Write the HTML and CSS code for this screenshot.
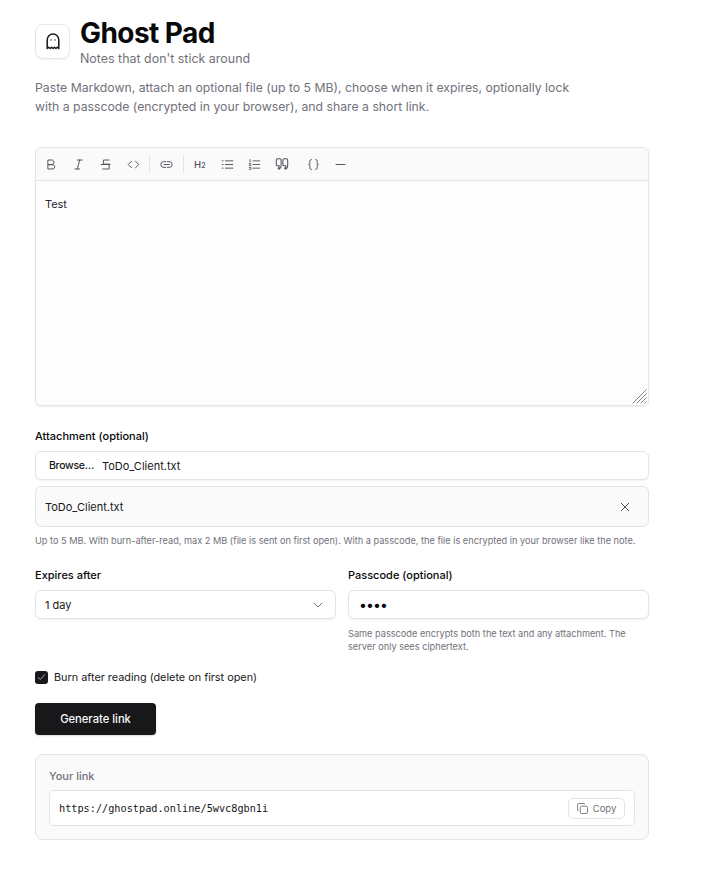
FILE: index.html
```html
<!DOCTYPE html>
<html lang="en">
<head>
<meta charset="utf-8">
<title>Ghost Pad</title>
<link rel="stylesheet" href="styles.css">
</head>
<body>
<main class="page">
  <header class="brand">
    <div class="logo">
      <svg width="14" height="17" viewBox="0 0 14 17" fill="none" stroke="#18181b" stroke-width="1.500" stroke-linejoin="round"><path d="M1.200 15.500V6.800a5.800 5.800 0 0 1 11.600 0v8.700l-1.450-1.300-1.450 1.300-1.450-1.300-1.450 1.300-1.450-1.300-1.450 1.300-1.450-1.300-1.450 1.300z"/><circle cx="5" cy="7" r=".7" fill="#18181b" stroke="none"/><circle cx="9" cy="7" r=".7" fill="#18181b" stroke="none"/></svg>
    </div>
    <div class="brand-text">
      <h1 class="title">Ghost Pad</h1>
      <p class="tagline">Notes that don't stick around</p>
    </div>
  </header>
  <p class="intro">Paste Markdown, attach an optional file (up to 5 MB), choose when it expires, optionally lock with a passcode (encrypted in your browser), and share a short link.</p>

  <section class="editor">
    <div class="toolbar">
      <button class="tool"><svg viewBox="0 0 16 16"><path d="M4 2.500h5a3 3 0 0 1 0 5.700H4zM4 8.200h5.800a2.700 2.700 0 0 1 0 5.300H4z"/></svg></button>
      <button class="tool"><svg viewBox="0 0 16 16"><path d="M6.500 2.500h6M3.500 13.500h6M9.500 2.500l-3 11"/></svg></button>
      <button class="tool"><svg viewBox="0 0 16 16"><path d="M12.500 2.500h-7l-.2 5h7.200M2.500 8h11M12.500 8v5.500h-8"/></svg></button>
      <button class="tool"><svg viewBox="0 0 16 16"><path d="M5.500 4 1.500 8l4 4M10.500 4l4 4-4 4"/></svg></button>
      <span class="sep"></span>
      <button class="tool"><svg viewBox="0 0 16 16"><path d="M7 4.500H4.500a3.500 3.500 0 0 0 0 7H7M9 4.500h2.500a3.500 3.500 0 0 1 0 7H9M5 8h6.500"/></svg></button>
      <span class="sep"></span>
      <button class="tool"><span class="h2">H<small>2</small></span></button>
      <button class="tool"><svg viewBox="0 0 16 16"><path d="M5.500 3.500h9M5.500 8h9M5.500 12.500h9M1.500 3.500h1M1.500 8h1M1.500 12.500h1"/></svg></button>
      <button class="tool"><svg viewBox="0 0 16 16"><path d="M6 3.500h8.500M6 8h8.500M6 12.500h8.500M2.500 2v3M1.500 7h2L1.500 9h2M1.500 11.500h2v2.500h-2" stroke-width="1.100"/></svg></button>
      <button class="tool"><svg class="quote" viewBox="0 0 16 16"><path d="M3 2h2.500A1.500 1.500 0 0 1 7 3.500V9a5 5 0 0 1-2.500 5l-1-1.200A3 3 0 0 0 5 10H3a1.500 1.500 0 0 1-1.500-1.500v-5A1.500 1.500 0 0 1 3 2zM10.500 2H13a1.500 1.500 0 0 1 1.500 1.500V9a5 5 0 0 1-2.500 5l-1-1.200a3 3 0 0 0 1.500-2.800h-2A1.500 1.500 0 0 1 9 8.500v-5A1.500 1.500 0 0 1 10.500 2z"/></svg></button>
      <button class="tool tool-gap"><svg viewBox="0 0 16 16"><path d="M5.500 2C4 2 3.500 2.700 3.500 4v2.500C3.500 7.500 3 8 2 8c1 0 1.500.5 1.500 1.500V12c0 1.300.5 2 2 2M10.500 2c1.500 0 2 .7 2 2v2.500c0 1 .5 1.500 1.500 1.500-1 0-1.500.5-1.500 1.500V12c0 1.300-.5 2-2 2"/></svg></button>
      <button class="tool"><svg viewBox="0 0 16 16"><path d="M2.500 8h11"/></svg></button>
    </div>
    <textarea class="note" aria-label="Note">Test</textarea>
    <svg class="grip" width="15" height="15" viewBox="0 0 15 15"><path d="M14.500 .5 .5 14.500M14.500 4.500l-10 10M14.500 8.500l-6 6M14.500 12.500l-2 2"/></svg>
  </section>

  <label class="label attach-label">Attachment (optional)</label>
  <div class="file-input"><span class="browse">Browse…</span><span>ToDo_Client.txt</span></div>
  <div class="file-chip">
    <span>ToDo_Client.txt</span>
    <svg class="remove" width="10" height="10" viewBox="0 0 10 10"><path d="M1 1l8 8M9 1L1 9"/></svg>
  </div>
  <p class="hint hint-attach">Up to 5 MB. With burn-after-read, max 2 MB (file is sent on first open). With a passcode, the file is encrypted in your browser like the note.</p>

  <div class="columns">
    <div class="field">
      <label class="label">Expires after</label>
      <div class="control select">
        <span>1 day</span>
        <svg width="10" height="6" viewBox="0 0 10 6"><path d="M1 1l4 4 4-4"/></svg>
      </div>
    </div>
    <div class="field">
      <label class="label">Passcode (optional)</label>
      <input class="control pass" type="password" value="1234" aria-label="Passcode">
      <p class="hint">Same passcode encrypts both the text and any attachment. The server only sees ciphertext.</p>
    </div>
  </div>

  <label class="burn">
    <span class="check"><svg width="9" height="8" viewBox="0 0 9 8"><path d="M1 4.200 3.300 6.500 8 1.200"/></svg></span>
    Burn after reading (delete on first open)
  </label>

  <button class="generate">Generate link</button>

  <section class="result">
    <div class="result-label">Your link</div>
    <div class="link-box">
      <code class="url">https://ghostpad.online/5wvc8gbn1i</code>
      <button class="copy">
        <svg width="11" height="11" viewBox="0 0 12 12"><rect x="3.500" y="3.500" width="8" height="8" rx="1.500"/><path d="M1.500 8.500A1 1 0 0 1 .5 7.500V2a1.500 1.500 0 0 1 1.500-1.500h5.500a1 1 0 0 1 1 1"/></svg>
        Copy
      </button>
    </div>
  </section>
</main>
</body>
</html>
```
FILE: styles.css
```css
* { box-sizing: border-box; }
html, body { margin: 0; background: #fff; }
body {
  font-family: Inter, "Liberation Sans", sans-serif;
  color: #18181b;
  font-size: 11px;
}
.page { width: 614px; margin-left: 35px; padding-top: 18px; }
button { font: inherit; color: inherit; background: none; border: 0; padding: 0; }

.brand { display: flex; align-items: flex-start; gap: 10px; }
.logo {
  width: 35px; height: 35px; margin-top: 6px;
  display: flex; align-items: center; justify-content: center;
  border: 1px solid #e7e7e9; border-radius: 8px; background: #fff;
  box-shadow: 0 1px 2px rgba(0,0,0,.06);
}
.title { margin: 0; font-size: 28px; line-height: 30px; font-weight: 700; letter-spacing: -.56px; color: #09090b; }
.tagline { margin: 2px 0 0; font-size: 12.450px; line-height: 17px; color: #71717a; }
.intro { margin: 11px 0 0; width: 560px; font-size: 12.250px; line-height: 19px; color: #71717a; }

.editor {
  position: relative;
  margin-top: 31px; height: 259px; display: flex; flex-direction: column;
  border: 1px solid #e4e4e7; border-radius: 6px; overflow: hidden;
  box-shadow: 0 1px 2px rgba(0,0,0,.08);
}
.toolbar {
  height: 33px; flex: none; display: flex; align-items: center; padding-left: 1.500px;
  background: #fafafa; border-bottom: 1px solid #e4e4e7;
}
.tool { width: 27.330px; height: 16px; display: flex; align-items: center; justify-content: center; color: #52525b; flex: none; }
.tool svg { width: 13px; height: 13px; fill: none; stroke: #52525b; stroke-width: 1.200; stroke-linecap: round; stroke-linejoin: round; }
.tool .quote { width: 14px; height: 14px; }
.tool-gap { margin-left: 4px; }
.sep { width: 1px; height: 18px; background: #e4e4e7; margin: 0 2.500px; flex: none; }
.h2 { font-size: 9.500px; font-weight: 500; }
.h2 small { font-size: 7px; }
.note {
  flex: 1; display: block; width: 100%; border: 0; outline: 0; resize: none;
  padding: 16px 9px; background: #fdfdfd; color: #27272a;
  font: 10.900px/14px Inter, "Liberation Sans", sans-serif;
}
.grip { position: absolute; right: 1px; bottom: 1px; fill: none; stroke: #808084; stroke-width: 1; }

.label { display: block; font-size: 11px; line-height: 14px; font-weight: 500; color: #09090b; }
.attach-label { margin-top: 23px; }
.file-input {
  margin-top: 8px; height: 29px; display: flex; align-items: center; gap: 8px; padding-left: 13px;
  border: 1px solid #e4e4e7; border-radius: 6px; background: #fff; color: #18181b;
  box-shadow: 0 1px 2px rgba(0,0,0,.05);
}
.browse { font-weight: 500; font-size: 10.500px; letter-spacing: -.3px; }
.file-chip {
  margin-top: 6px; height: 41px; display: flex; align-items: center; justify-content: space-between;
  padding: 0 18px 0 9px; border: 1px solid #e4e4e7; border-radius: 6px; background: #fafafa;
}
.remove { fill: none; stroke: #52525b; stroke-width: 1; }
.hint { margin: 8px 0 0; font-size: 9.200px; line-height: 13px; color: #71717a; }
.hint-attach { margin-top: 7px; white-space: nowrap; }

.columns { margin-top: 21px; display: grid; grid-template-columns: 1fr 1fr; gap: 12px; }
.field .label { margin-bottom: 8px; }
.control {
  width: 100%; height: 29px; display: flex; align-items: center; justify-content: space-between; padding: 0 12px 0 9px;
  border: 1px solid #e4e4e7; border-radius: 6px; background: #fff;
  box-shadow: 0 1px 2px rgba(0,0,0,.06);
}
.pass { padding-left: 10px; font: 14px Inter, "Liberation Sans", sans-serif; letter-spacing: -.9px; color: #09090b; outline: 0; }
.select svg { fill: none; stroke: #71717a; stroke-width: 1; }

.burn { margin-top: 17px; display: flex; align-items: center; gap: 6px; line-height: 14px; color: #18181b; font-size: 10.850px; }
.check {
  width: 13px; height: 13px; display: flex; align-items: center; justify-content: center;
  background: #18181b; border-radius: 3px;
}
.check svg { fill: none; stroke: #a1a1aa; stroke-width: 1; }

.generate {
  display: block; margin-top: 19px; width: 121px; height: 32px; border-radius: 4px;
  background: #18181b; color: #fafafa; font-weight: 500; font-size: 11.200px;
  box-shadow: 0 1px 2px rgba(0,0,0,.15);
}

.result {
  margin-top: 19px; height: 86px; padding: 15px 13px 0 13px;
  border: 1px solid #e4e4e7; border-radius: 8px; background: #fafafa;
}
.result-label { font-size: 11px; line-height: 13px; font-weight: 500; color: #71717a; }
.link-box {
  margin-top: 7px; height: 36px; display: flex; align-items: center; justify-content: space-between;
  padding: 0 9px; border: 1px solid #e4e4e7; border-radius: 5px; background: #fff;
}
.url { font-family: "DejaVu Sans Mono", monospace; font-size: 10.220px; color: #18181b; }
.copy {
  width: 57px; height: 21px; display: flex; align-items: center; justify-content: center; gap: 5px;
  border: 1px solid #e4e4e7; border-radius: 5px; color: #71717a; font-size: 9.500px;
}
.copy svg { fill: none; stroke: #71717a; stroke-width: 1; }
```
